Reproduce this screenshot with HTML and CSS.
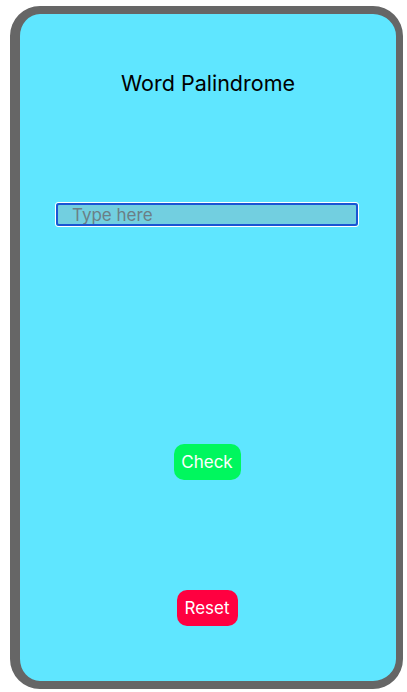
FILE: index.html
```html
<!DOCTYPE html>
<html>
<head>
<meta charset="utf-8">
<link rel="stylesheet" href="styles.css">
</head>
<body>
<div class="frame">
  <div class="screen">
    <h1 class="title">Word Palindrome</h1>
    <div class="field"><input class="input" type="text" placeholder="Type here"></div>
    <button class="btn check">Check</button>
    <button class="btn reset">Reset</button>
  </div>
</div>
</body>
</html>
```
FILE: styles.css
```css
html, body { margin: 0; padding: 0; background: #fff; }
body { font-family: Inter, Roboto, "Noto Sans", sans-serif; }
.frame {
  margin: 6px 0 0 10px;
  width: 376px;
  height: 667px;
  border-style: solid;
  border-color: #666666;
  border-width: 8px 7px 8px 10px;
  border-radius: 30px;
  background: #5fe6ff;
  overflow: hidden;
}
.screen {
  height: 100%;
  display: flex;
  flex-direction: column;
  align-items: center;
  border-radius: 22px;
}
.title {
  margin: 56px 0 0 0;
  font-size: 21.5px;
  font-weight: 400;
  line-height: 26px;
  color: #000;
}
.field {
  margin-top: 106px;
  margin-right: 2px;
  width: 304px;
  height: 25px;
  box-sizing: border-box;
  border: 1px solid #ffffff;
  border-radius: 3px;
}
.input {
  display: block;
  width: 100%;
  height: 100%;
  box-sizing: border-box;
  border: 2px solid #1a55d4;
  border-radius: 3px;
  background: #72cfe0;
  padding: 0 0 0 14px;
  font-family: Inter, Roboto, "Noto Sans", sans-serif;
  font-size: 17px;
  color: #000;
  outline: none;
}
.input::placeholder { color: #6b7f86; }
.btn {
  border: none;
  border-radius: 10px;
  height: 36px;
  padding: 0;
  font-family: Inter, Roboto, "Noto Sans", sans-serif;
  font-size: 17px;
  color: #fff;
}
.check { margin-top: 217px; margin-right: 2px; background: #00f75e; width: 67px; }
.reset { margin-top: 110px; margin-right: 2px; background: #ff0040; width: 61px; }
```
